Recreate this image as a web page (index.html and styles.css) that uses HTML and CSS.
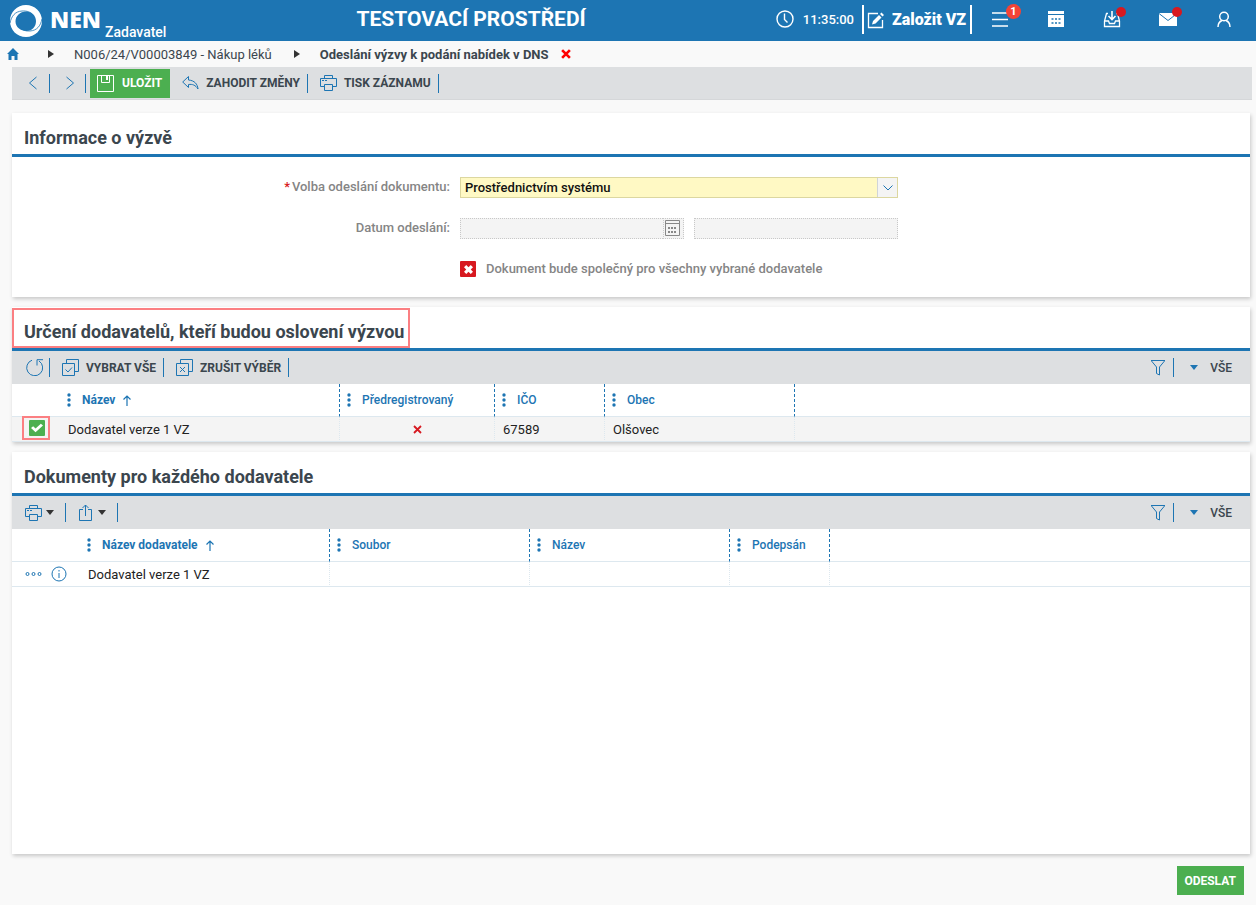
FILE: index.html
```html
<!DOCTYPE html>
<html lang="cs">
<head>
  <meta charset="UTF-8">
  <meta name="viewport" content="width=device-width, initial-scale=1.0">
  <title>NEN - Odeslání výzvy k podání nabídek v DNS</title>
  <link rel="stylesheet" href="styles.css">
</head>
<body>

  <!-- shared icons -->
  <svg class="sprite" xmlns="http://www.w3.org/2000/svg">
    <symbol id="i-print" viewBox="0 0 17 16">
      <path d="M4.5 3.5v-3h8v3M4.5 11.500h-4v-8h16v8h-4M4.500 9.500h8v6h-8zM2 5.500h2M5 5.500h2" />
    </symbol>
    <symbol id="i-filter" viewBox="0 0 16 17">
      <path d="M1 1.500h14M1.500 2l5 6v6.500l3 1.500V8l5-6" />
    </symbol>
    <symbol id="i-up" viewBox="0 0 8 11">
      <path d="M4 11V1M0.500 4.500L4 1l3.500 3.500" />
    </symbol>
    <symbol id="i-dots" viewBox="0 0 4 14">
      <path d="M2 0.300a1.700 1.700 0 1 1 0 3.400 1.700 1.700 0 0 1 0-3.400zM2 5.300a1.700 1.700 0 1 1 0 3.400 1.700 1.700 0 0 1 0-3.400zM2 10.300a1.700 1.700 0 1 1 0 3.400 1.700 1.700 0 0 1 0-3.400z" />
    </symbol>
    <symbol id="i-caret" viewBox="0 0 8 5">
      <path d="M0 0h8L4 5z" />
    </symbol>
    <symbol id="i-right" viewBox="0 0 6 8">
      <path d="M0 0l6 4-6 4z" />
    </symbol>
    <symbol id="i-cross" viewBox="0 0 9 9">
      <path d="M1 1l7 7M8 1l-7 7" />
    </symbol>
  </svg>

  <header class="header">
    <a href="#" class="brand">
      <svg class="logo" width="32" height="32" viewBox="0 0 32 32" fill="#fff">
        <path fill-rule="evenodd" d="M16 0C24.500 0 32 6.500 32 16c0 9-7 16-16 16S0 25 0 16 7 0 16 0zM16 6.500c-6 0-10.500 4.500-10.500 10S10.500 26 16.500 26 26 21.500 26 16 21.500 6.500 16 6.500z" />
        <path fill="none" stroke="#1d75b3" stroke-width=".8" d="M0 18C1.500 11 5 6.500 12 6c5-.3 9 1 11.500 4.500M32 14c-1.500 7-5 11.500-12 12-5 .3-8-1-10.500-4" />
      </svg>
      <span class="brand-name">NEN</span>
      <span class="brand-role">Zadavatel</span>
    </a>

    <div class="env">TESTOVACÍ PROSTŘEDÍ</div>

    <div class="clock">
      <svg width="18" height="18" viewBox="0 0 18 18" fill="none" stroke="#fff" stroke-width="1.400">
        <circle cx="9" cy="9" r="8" />
        <path d="M8.500 3.500V9.500l3 3" />
      </svg>
      <span>11:35:00</span>
    </div>

    <button class="create">
      <svg width="18" height="18" viewBox="0 0 18 18" fill="none" stroke="#fff">
        <path d="M11 2.500H1.500v14h14V9" stroke-width="1.300" />
        <path d="M5 13.500l1-3.500 6-6 2.500 2.500-6 6zM13 3l1.500-1.500L17 4l-1.500 1.500z" fill="#fff" stroke="none" />
      </svg>
      <span>Založit VZ</span>
    </button>

    <nav class="header-icons">
      <button class="icon-btn" aria-label="Menu">
        <svg width="18" height="18" viewBox="0 0 18 18" stroke="#fff" stroke-width="1.700">
          <path d="M1 3h16M1 9.500h16M1 16h16" />
        </svg>
        <span class="badge">1</span>
      </button>
      <button class="icon-btn" aria-label="Kalendář">
        <svg width="18" height="18" viewBox="0 0 18 18">
          <path fill="#fff" d="M1 1h16v3H1zM1 5h16v12H1z" />
          <path stroke="#1d75b3" stroke-width="1.500" stroke-dasharray="2 1.500" d="M4.500 9h9M4.500 13h9" />
        </svg>
      </button>
      <button class="icon-btn" aria-label="Doručené">
        <svg width="18" height="18" viewBox="0 0 18 18" fill="none" stroke="#fff" stroke-width="1.300">
          <path d="M5 3.500H3.500L1.500 11v5.500h15V11l-2-7.500H13M1.500 11H5.500l1 2.500h5l1-2.500h4" />
          <path d="M9 1v8.500M5.500 6L9 9.500 12.500 6" stroke-width="1.600" />
        </svg>
        <span class="dot"></span>
      </button>
      <button class="icon-btn" aria-label="Zprávy">
        <svg width="18" height="18" viewBox="0 0 18 18">
          <path fill="#fff" d="M0 3h18v13H0z" />
          <path fill="none" stroke="#1d75b3" d="M0 3.500l9 7 9-7" />
        </svg>
        <span class="dot"></span>
      </button>
      <button class="icon-btn" aria-label="Uživatel">
        <svg width="18" height="18" viewBox="0 0 18 18" fill="none" stroke="#fff" stroke-width="1.500">
          <circle cx="9" cy="6.500" r="4.300" />
          <path d="M3 17c0-3 1.500-5.500 4-6.500M15 17c0-3-1.500-5.500-4-6.500" />
        </svg>
      </button>
    </nav>
  </header>

  <nav class="breadcrumb">
    <a href="#" class="home" aria-label="Domů">
      <svg width="12" height="12" viewBox="0 0 12 12" fill="#1d75b3">
        <path d="M6 0L12 6h-1.500v6H7.500V8h-3v4H1.500V6H0z" />
      </svg>
    </a>
    <svg class="crumb-arrow" width="6" height="8"><use href="#i-right" /></svg>
    <a href="#">N006/24/V00003849 - Nákup léků</a>
    <svg class="crumb-arrow" width="6" height="8"><use href="#i-right" /></svg>
    <span class="current">Odeslání výzvy k podání nabídek v DNS</span>
    <button class="close" aria-label="Zavřít">
      <svg width="10" height="10" stroke="#f00" stroke-width="2.400"><use href="#i-cross" /></svg>
    </button>
  </nav>

  <div class="toolbar main-toolbar">
    <button class="tool arrow" aria-label="Předchozí">
      <svg width="10" height="14" viewBox="0 0 10 14"><path d="M8.500 1L1.500 7l7 6" /></svg>
    </button>
    <button class="tool arrow" aria-label="Další">
      <svg width="10" height="14" viewBox="0 0 10 14"><path d="M1.500 1l7 6-7 6" /></svg>
    </button>
    <button class="btn save">
      <svg width="17" height="17" viewBox="0 0 17 17" fill="none" stroke="#fff">
        <path d="M0.500 0.500h16v16H0.500zM4.500 1v6.500h8V1" />
        <path fill="#fff" stroke="none" d="M9 1h2v4H9z" />
      </svg>
      <span>ULOŽIT</span>
    </button>
    <button class="tool">
      <svg width="17" height="16" viewBox="0 0 17 16"><path d="M6.500 1.500L0.700 7l5.800 5.500V9.500c4-.5 7 .5 9.500 4.500-.5-5-3.500-8.500-9.500-9z" /></svg>
      <span>ZAHODIT ZMĚNY</span>
    </button>
    <button class="tool">
      <svg width="17" height="16"><use href="#i-print" /></svg>
      <span>TISK ZÁZNAMU</span>
    </button>
  </div>

  <main class="content">

    <section class="panel">
      <div class="panel-title"><h2>Informace o výzvě</h2></div>
      <form class="form">
        <label for="volba"><span class="required">*</span>Volba odeslání dokumentu:</label>
        <div class="select">
          <select id="volba">
            <option>Prostřednictvím systému</option>
          </select>
          <span class="select-arrow">
            <svg width="10" height="6" viewBox="0 0 10 6"><path d="M0.500 0.500L5 5l4.500-4.500" /></svg>
          </span>
        </div>

        <label for="datum">Datum odeslání:</label>
        <div class="date">
          <div class="date-field">
            <input type="text" id="datum" disabled>
            <button type="button" aria-label="Vybrat datum" disabled>
              <svg width="15" height="16" viewBox="0 0 15 16" fill="none" stroke="#888">
                <path d="M0.500 0.500h14v15H0.500zM0.500 3.500h14" />
                <path stroke-width="2" stroke-dasharray="2 1" d="M3 8h8M3 12h8" />
              </svg>
            </button>
          </div>
          <input type="text" aria-label="Čas odeslání" disabled>
        </div>

        <div class="check-line">
          <input type="checkbox" id="spolecny" class="check check-no">
          <label for="spolecny">Dokument bude společný pro všechny vybrané dodavatele</label>
        </div>
      </form>
    </section>

    <section class="panel">
      <div class="panel-title"><h2 class="marked">Určení dodavatelů, kteří budou oslovení výzvou</h2></div>
      <div class="toolbar">
        <button class="tool refresh" aria-label="Obnovit">
          <svg width="17" height="17" viewBox="0 0 17 17"><path d="M6 1.200A8 8 0 1 0 13 2M11 6.500V0.700h6" /></svg>
        </button>
        <button class="tool">
          <svg width="17" height="17" viewBox="0 0 17 17"><path d="M0.500 4.500h12v12h-12zM4.500 4V0.500h12v12H13M3.500 10.500l2.500 2.500 4-4.500" /></svg>
          <span>VYBRAT VŠE</span>
        </button>
        <button class="tool">
          <svg width="17" height="17" viewBox="0 0 17 17"><path d="M0.500 4.500h12v12h-12zM4.500 4V0.500h12v12H13M4 8l5 5M9 8l-5 5" /></svg>
          <span>ZRUŠIT VÝBĚR</span>
        </button>
        <button class="tool filter" aria-label="Filtr">
          <svg width="16" height="17"><use href="#i-filter" /></svg>
        </button>
        <button class="view">
          <svg width="8" height="5"><use href="#i-caret" /></svg>
          <span>VŠE</span>
        </button>
      </div>
      <table class="grid">
        <colgroup>
          <col class="w-48"><col class="w-280"><col class="w-155"><col class="w-110"><col class="w-190"><col>
        </colgroup>
        <thead>
          <tr>
            <th></th>
            <th class="sorted"><div><svg class="dots" width="4" height="14"><use href="#i-dots" /></svg>Název<svg class="sort" width="8" height="11"><use href="#i-up" /></svg></div></th>
            <th><div><svg class="dots" width="4" height="14"><use href="#i-dots" /></svg>Předregistrovaný</div></th>
            <th><div><svg class="dots" width="4" height="14"><use href="#i-dots" /></svg>IČO</div></th>
            <th><div><svg class="dots" width="4" height="14"><use href="#i-dots" /></svg>Obec</div></th>
            <th></th>
          </tr>
        </thead>
        <tbody>
          <tr class="selected">
            <td><span class="marked-check"><input type="checkbox" class="check" aria-label="Vybrat dodavatele" checked></span></td>
            <td>Dodavatel verze 1 VZ</td>
            <td class="center"><svg width="9" height="9" stroke="#d71920" stroke-width="1.800"><use href="#i-cross" /></svg></td>
            <td>67589</td>
            <td>Olšovec</td>
            <td></td>
          </tr>
        </tbody>
      </table>
    </section>

    <section class="panel fill">
      <div class="panel-title"><h2>Dokumenty pro každého dodavatele</h2></div>
      <div class="toolbar">
        <button class="tool drop" aria-label="Tisk">
          <svg width="17" height="16"><use href="#i-print" /></svg>
          <svg class="drop-caret" width="8" height="5"><use href="#i-caret" /></svg>
        </button>
        <button class="tool drop" aria-label="Export">
          <svg width="16" height="17" viewBox="0 0 16 17"><path d="M5 5.500H1.500v11h12v-11H10M7.500 12V1M4.500 4l3-3 3 3" /></svg>
          <svg class="drop-caret" width="8" height="5"><use href="#i-caret" /></svg>
        </button>
        <button class="tool filter" aria-label="Filtr">
          <svg width="16" height="17"><use href="#i-filter" /></svg>
        </button>
        <button class="view">
          <svg width="8" height="5"><use href="#i-caret" /></svg>
          <span>VŠE</span>
        </button>
      </div>
      <table class="grid">
        <colgroup>
          <col class="w-68"><col class="w-250"><col class="w-200"><col class="w-200"><col class="w-100"><col>
        </colgroup>
        <thead>
          <tr>
            <th></th>
            <th class="sorted"><div><svg class="dots" width="4" height="14"><use href="#i-dots" /></svg>Název dodavatele<svg class="sort" width="8" height="11"><use href="#i-up" /></svg></div></th>
            <th><div><svg class="dots" width="4" height="14"><use href="#i-dots" /></svg>Soubor</div></th>
            <th><div><svg class="dots" width="4" height="14"><use href="#i-dots" /></svg>Název</div></th>
            <th><div><svg class="dots" width="4" height="14"><use href="#i-dots" /></svg>Podepsán</div></th>
            <th></th>
          </tr>
        </thead>
        <tbody>
          <tr>
            <td>
              <div class="row-actions">
                <button aria-label="Akce">
                  <svg width="17" height="16" viewBox="0 0 17 16"><circle cx="2.500" cy="8" r="1.500" /><circle cx="8.500" cy="8" r="1.500" /><circle cx="14.500" cy="8" r="1.500" /></svg>
                </button>
                <button aria-label="Detail">
                  <svg width="16" height="16" viewBox="0 0 16 16"><circle cx="8" cy="8" r="7" /><path d="M8 7v5M8 4v1.500" /></svg>
                </button>
              </div>
            </td>
            <td>Dodavatel verze 1 VZ</td>
            <td></td>
            <td></td>
            <td></td>
            <td></td>
          </tr>
        </tbody>
      </table>
    </section>

  </main>

  <footer class="footer">
    <button class="btn">ODESLAT</button>
  </footer>

</body>
</html>
```

FILE: styles.css
```css
:root {
  --blue: #1d75b3;
  --green: #4caf50;
  --text: #3b464e;
  --bar: #dddfe1;
  --line: #dde8ef;
  --mark: #fb7f82;
}

* {
  box-sizing: border-box;
}

body {
  margin: 0;
  min-height: 100vh;
  display: flex;
  flex-direction: column;
  background-color: #f9f9f9;
  color: var(--text);
  font-family: Roboto, "Liberation Sans", sans-serif;
  font-size: 13px;
}

button,
input,
select {
  font: inherit;
  color: inherit;
}

button {
  border: none;
  padding: 0;
  background: none;
  cursor: pointer;
}

a {
  color: inherit;
  text-decoration: none;
}

svg {
  display: block;
  flex-shrink: 0;
}

.sprite {
  position: absolute;
  width: 0;
  height: 0;
}

/* ---------- header ---------- */
.header {
  display: flex;
  align-items: center;
  height: 41px;
  padding: 0 4px 0 10px;
  background-color: var(--blue);
  color: #fff;
}

.brand {
  display: flex;
  align-items: center;
  height: 39px;
}

.brand-name {
  margin-left: 8px;
  font-family: "Open Sans", sans-serif;
  font-size: 23px;
  line-height: 36px;
  height: 39px;
  font-weight: 800;
}

.brand-role {
  align-self: flex-end;
  margin-left: 4px;
  font-size: 14px;
  line-height: 16px;
  font-weight: 500;
}

.env {
  flex: 1;
  text-align: center;
  font-size: 21px;
  line-height: 38px;
  height: 41px;
  font-weight: 700;
}

.clock {
  display: flex;
  align-items: center;
  gap: 9px;
  margin-right: 8px;
  height: 38px;
  align-self: flex-start;
  font-weight: 500;
}

.create {
  display: flex;
  align-items: center;
  align-self: flex-start;
  gap: 7px;
  height: 29px;
  margin-top: 5px;
  padding: 0 4px 0 3px;
  border-left: 2px solid #fff;
  border-right: 2px solid #fff;
  font-size: 16px;
  font-weight: 900;
}

.header-icons {
  display: flex;
  align-self: flex-start;
}

.icon-btn {
  position: relative;
  display: flex;
  align-items: center;
  justify-content: center;
  width: 56px;
  height: 38px;
}

.badge {
  position: absolute;
  top: 4px;
  left: 34px;
  width: 15px;
  height: 15px;
  border-radius: 50%;
  background-color: #f44336;
  font-size: 11px;
  line-height: 15px;
  font-weight: 700;
}

.dot {
  position: absolute;
  top: 7px;
  left: 32px;
  width: 10px;
  height: 10px;
  border-radius: 50%;
  background-color: #d71920;
}

/* ---------- breadcrumb ---------- */
.breadcrumb {
  display: flex;
  align-items: center;
  height: 26px;
  padding-left: 7px;
}

.breadcrumb .current {
  font-weight: 700;
}

.crumb-arrow {
  margin: 0 20px 0 22px;
  fill: #333;
}

.home + .crumb-arrow {
  margin-left: 29px;
}

.close {
  margin-left: 12px;
}

/* ---------- toolbars ---------- */
.toolbar {
  display: flex;
  align-items: center;
  height: 33px;
  padding: 0 6px;
  background-color: var(--bar);
}

.main-toolbar {
  margin: 0 4px 0 12px;
  border-bottom: 1px solid #d5d7d9;
}

.tool {
  display: flex;
  align-items: center;
  gap: 7px;
  height: 19px;
  padding: 0 7px 0 12px;
  border-right: 1px solid var(--blue);
  font-size: 12px;
  font-weight: 700;
}

.tool svg {
  fill: none;
  stroke: var(--blue);
}

.tool.arrow {
  padding: 0 10px 0 15px;
}

.tool.arrow:first-child {
  padding: 0 11px 0 10px;
}

.tool.refresh {
  padding: 0 6px 0 8px;
}

.tool.drop {
  gap: 4px;
  padding: 0 11px 0 12px;
}

.tool.drop:first-child {
  padding-left: 7px;
}

.tool .drop-caret {
  fill: #333;
  stroke: none;
}

.tool.filter {
  margin-left: auto;
}

.view {
  display: flex;
  align-items: center;
  gap: 12px;
  padding: 0 12px 0 16px;
  font-size: 12px;
  font-weight: 500;
}

.view svg {
  fill: var(--blue);
}

.btn {
  display: flex;
  align-items: center;
  gap: 8px;
  height: 29px;
  padding: 0 8px 0 7px;
  background-color: var(--green);
  color: #fff;
  font-size: 12px;
  font-weight: 700;
}

.btn.save {
  margin-left: 4px;
}

/* ---------- panels ---------- */
.content {
  flex: 1;
  display: flex;
  flex-direction: column;
  gap: 10px;
  padding: 13px 6px 0 12px;
}

.panel {
  background-color: #fff;
  box-shadow: 1px 2px 4px rgba(0, 0, 0, 0.2);
}

.panel.fill {
  flex: 1;
}

.panel-title {
  display: flex;
  height: 44px;
  padding-top: 1px;
  border-bottom: 3px solid var(--blue);
}

h2 {
  margin: 0;
  padding: 8px 4px 0 10px;
  border: 2px solid transparent;
  font-size: 18px;
  line-height: 28px;
  font-weight: 700;
}

h2.marked {
  border-color: var(--mark);
}

/* ---------- form ---------- */
.form {
  display: grid;
  grid-template-columns: 438px 438px;
  gap: 20px 10px;
  padding: 20px 0 18px;
  color: #858585;
  line-height: 20px;
  font-weight: 500;
}

.form > label {
  text-align: right;
}

.required {
  margin-right: 2px;
  color: #d71920;
}

.select {
  position: relative;
}

.select select {
  display: block;
  appearance: none;
  width: 100%;
  height: 21px;
  padding: 0 24px 0 4px;
  border: 1px solid #dcd7a0;
  border-radius: 0;
  background-color: #fff9c4;
  color: #111;
}

.select-arrow {
  position: absolute;
  top: 1px;
  right: 1px;
  display: flex;
  align-items: center;
  justify-content: center;
  width: 20px;
  height: 19px;
  border-left: 1px solid #d0d4d8;
  background-color: #f4f4f4;
  pointer-events: none;
}

.select-arrow svg {
  fill: none;
  stroke: var(--blue);
}

.date {
  display: flex;
  gap: 10px;
}

.date-field {
  display: flex;
  width: 224px;
}

.date input {
  flex: 1;
  min-width: 0;
  height: 21px;
  border: 1px dotted #c8c8c8;
  background-color: #f4f4f4;
}

.date-field input {
  border-right: none;
}

.date-field button {
  display: flex;
  align-items: center;
  justify-content: center;
  width: 21px;
  padding: 0 2px 1px 0;
  border: 1px dotted #c8c8c8;
  background-color: #f4f4f4;
}

.check-line {
  grid-column: 2;
  display: flex;
  align-items: center;
  gap: 10px;
  height: 20px;
}

.check {
  appearance: none;
  display: block;
  position: relative;
  width: 16px;
  height: 16px;
  margin: 0;
  border-radius: 1px;
  background-color: var(--green);
}

.check::before {
  content: "";
  position: absolute;
  inset: 3px 2px;
  background-color: #fff;
  clip-path: polygon(0 50%, 18% 32%, 38% 55%, 82% 8%, 100% 26%, 38% 92%);
}

.check-no {
  background-color: #d71920;
}

.check-no::before {
  inset: 4px 3px 3px 4px;
  clip-path: polygon(25% 0, 50% 25%, 75% 0, 100% 25%, 75% 50%, 100% 75%, 75% 100%, 50% 75%, 25% 100%, 0 75%, 25% 50%, 0 25%);
}

/* ---------- tables ---------- */
.grid {
  width: 100%;
  table-layout: fixed;
  border-collapse: separate;
  border-spacing: 0;
}

.w-48 { width: 48px; }
.w-68 { width: 68px; }
.w-100 { width: 100px; }
.w-110 { width: 110px; }
.w-155 { width: 155px; }
.w-190 { width: 190px; }
.w-200 { width: 200px; }
.w-250 { width: 250px; }
.w-280 { width: 280px; }

.grid th {
  height: 33px;
  padding: 0 7px;
  border-right: 1px dashed var(--blue);
  border-bottom: 1px solid var(--line);
  color: var(--blue);
  font-size: 12px;
  font-weight: 500;
  text-align: left;
}

.grid th.sorted {
  font-weight: 700;
}

.grid th:first-child,
.grid th:last-child {
  border-right: none;
}

.grid th div {
  display: flex;
  align-items: center;
}

.dots {
  margin-right: 11px;
  fill: var(--blue);
}

.sort {
  margin-left: 8px;
  fill: none;
  stroke: var(--blue);
  stroke-width: 1.2px;
}

.grid td {
  height: 25px;
  padding: 0 8px;
  border-right: 1px dotted var(--line);
  border-bottom: 1px solid var(--line);
  color: #222;
}

.grid td:first-child,
.grid td:last-child {
  border-right: none;
}

.grid .selected td {
  background-color: #f4f4f4;
}

.grid td.center svg {
  margin: 0 auto;
}

.marked-check {
  position: absolute;
  margin: -13px 0 0 2px;
  padding: 2px 3px 2px 5px;
  border: 2px solid var(--mark);
}

.row-actions {
  display: flex;
  gap: 9px;
  padding-left: 5px;
}

.row-actions svg {
  fill: none;
  stroke: var(--blue);
}

/* ---------- footer ---------- */
.footer {
  display: flex;
  justify-content: flex-end;
  padding: 12px 12px 10px;
}
```
